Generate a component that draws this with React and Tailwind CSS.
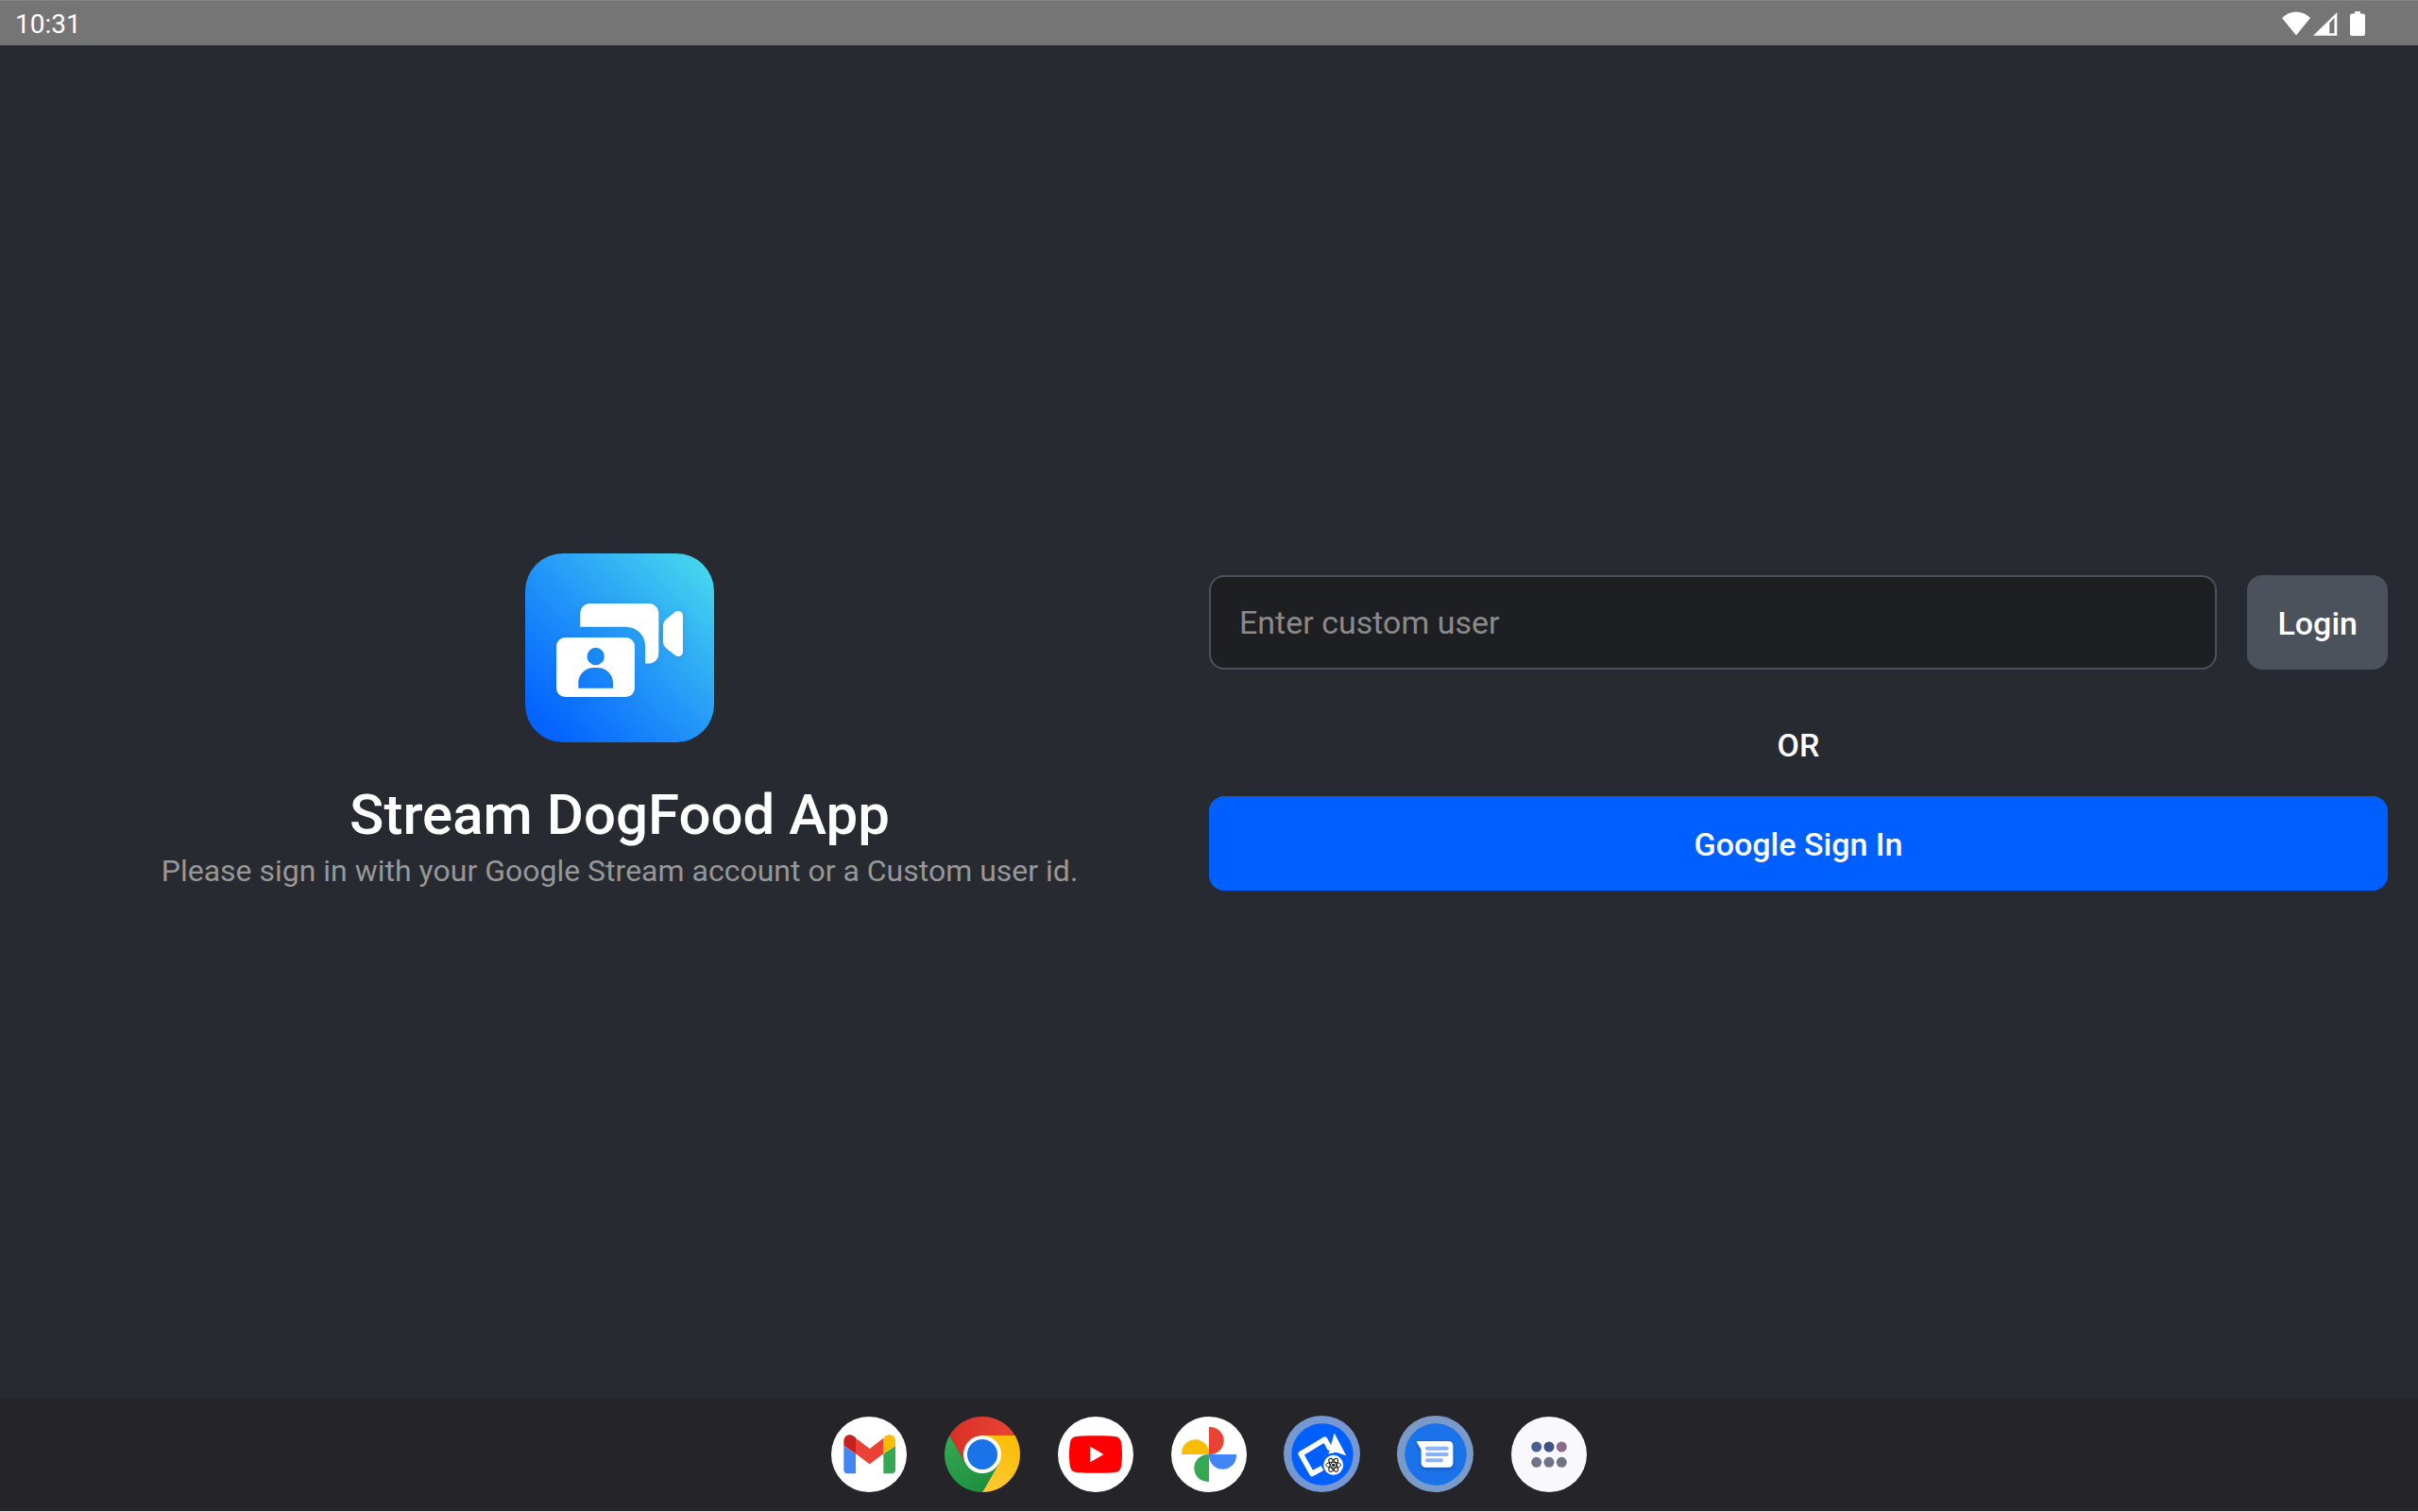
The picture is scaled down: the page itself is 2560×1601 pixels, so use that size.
import React from "react";

function WifiIcon() {
  return (
    <svg className="h-[26px] w-[30px]" viewBox="0 0 30 26" fill="#fff" aria-hidden="true">
      <path d="M15 25.500 0 7C4.300 2.800 9.500.5 15 .5S25.700 2.800 30 7Z" />
    </svg>
  );
}

function SignalIcon() {
  return (
    <svg className="h-[26px] w-[26px]" viewBox="0 0 26 26" fill="#fff" fillRule="evenodd" aria-hidden="true">
      <path d="M0 25.700 25.300 1v24.700ZM17.300 23.200h5.200V6.700l-5.200 5.500Z" />
    </svg>
  );
}

function BatteryIcon() {
  return (
    <svg className="h-[26px] w-[16px]" viewBox="0 0 16 26" fill="#fff" aria-hidden="true">
      <path d="M5 0h6v2.500h3A2 2 0 0 1 16 4.500V24a2 2 0 0 1-2 2H2a2 2 0 0 1-2-2V4.500a2 2 0 0 1 2-2h3Z" />
    </svg>
  );
}

function StatusBar() {
  return (
    <header className="flex h-12 items-center justify-between border-t border-[#858585] bg-[#757575] pr-14 pl-4">
      <time className="pt-0.5 text-[28px] leading-8 text-white">10:31</time>
      <div className="flex items-center">
        <WifiIcon />
        <span className="ml-[3px] flex">
          <SignalIcon />
        </span>
        <span className="ml-[13px] flex">
          <BatteryIcon />
        </span>
      </div>
    </header>
  );
}

function StreamLogo() {
  return (
    <svg className="size-[200px]" viewBox="0 0 200 200" role="img" aria-label="Stream Video">
      <defs>
        <linearGradient id="logo-bg" x1="22" y1="178" x2="188" y2="12" gradientUnits="userSpaceOnUse">
          <stop offset="0" stopColor="#0564ff" />
          <stop offset="0.5" stopColor="#259af8" />
          <stop offset="1" stopColor="#45d5ee" />
        </linearGradient>
        <filter id="logo-shadow" x="-20%" y="-20%" width="140%" height="140%">
          <feDropShadow dx="0" dy="1" stdDeviation="4" floodColor="#003c8c" floodOpacity="0.160" />
        </filter>
      </defs>
      <rect width="200" height="200" rx="40" fill="url(#logo-bg)" />
      <g fill="#fff" filter="url(#logo-shadow)">
        <path d="M58.300 77.700V63a10 10 0 0 1 10-10h63a10 10 0 0 1 10 10v43.500a10 10 0 0 1-10 10h-4.100V98.500a20.500 20.500 0 0 0-20.500-20.800Z" />
        <path
          fillRule="evenodd"
          d="M42.500 89h64a9.500 9.500 0 0 1 9.500 9.500v44a9.500 9.500 0 0 1-9.500 9.500h-64a9.500 9.500 0 0 1-9.500-9.500v-44a9.500 9.500 0 0 1 9.500-9.500ZM74.700 99.800a9.200 9.200 0 1 0 0 18.400a9.200 9.200 0 1 0 0-18.400ZM56.300 142.700H93V137a16 16 0 0 0-16-16h-4.700a16 16 0 0 0-16 16Z"
        />
        <path d="M146 77.500c0-3.500 1-5.800 3.500-7.900l9-7.400c3.500-2.800 8.500-1 8.500 4.300v37c0 5.300-5 7.100-8.500 4.300l-9-7.400c-2.500-2.100-3.500-4.400-3.500-7.900Z" />
      </g>
    </svg>
  );
}

function GmailIcon() {
  return (
    <svg className="size-20" viewBox="0 0 80 80" aria-hidden="true">
      <circle cx="40" cy="40" r="40" fill="#fff" />
      <path d="M13.300 31 26 39.300v21h-8.700a4 4 0 0 1-4-4Z" fill="#4285f4" />
      <path d="M68 31 55.300 39.300v21H64a4 4 0 0 0 4-4Z" fill="#34a853" />
      <path d="M26 22.700 40.700 34l14.600-11.300v16.600l-14.600 11L26 39.300Z" fill="#ea4335" />
      <path d="M26 39.300 13.300 30.700V26c0-6 6.200-8.800 11-5.100L26 22.300Z" fill="#c5221f" />
      <path d="M55.300 39.300 68 30.700V26c0-6-6.200-8.800-11-5.100l-1.700 1.400Z" fill="#fbbc04" />
    </svg>
  );
}

function ChromeIcon() {
  return (
    <svg className="size-20" viewBox="0 0 80 80" aria-hidden="true">
      <defs>
        <linearGradient id="chrome-red" x1="0" x2="1">
          <stop offset="0" stopColor="#d93025" />
          <stop offset="1" stopColor="#ea4335" />
        </linearGradient>
        <linearGradient id="chrome-yellow" x1="0.700" y1="0" x2="0.300" y2="1">
          <stop offset="0" stopColor="#fbbc04" />
          <stop offset="1" stopColor="#fcc934" />
        </linearGradient>
        <linearGradient id="chrome-green" x1="0.200" y1="0" x2="0.700" y2="1">
          <stop offset="0" stopColor="#34a853" />
          <stop offset="1" stopColor="#1e8e3e" />
        </linearGradient>
      </defs>
      <path d="M5.360 20A40 40 0 0 1 74.640 20H40L22.680 50Z" fill="url(#chrome-red)" />
      <path d="M74.640 20A40 40 0 0 1 40 80L57.320 50 40 20Z" fill="url(#chrome-yellow)" />
      <path d="M40 80A40 40 0 0 1 5.360 20L22.680 50 57.320 50Z" fill="url(#chrome-green)" />
      <circle cx="40" cy="40" r="20" fill="#fff" />
      <circle cx="40" cy="40" r="16" fill="#1a73e8" />
    </svg>
  );
}

function YouTubeIcon() {
  return (
    <svg className="size-20" viewBox="0 0 80 80" aria-hidden="true">
      <circle cx="40" cy="40" r="40" fill="#fff" />
      <path
        d="M40 20.300c9 0 17.500.2 21.900 1 2.500.6 4.300 2.300 4.900 4.900.8 4 1.200 9 1.200 13.800s-.4 9.800-1.200 13.800c-.6 2.600-2.400 4.300-4.900 4.900-4.400.8-12.900 1-21.900 1s-17.500-.2-21.900-1c-2.500-.6-4.300-2.300-4.900-4.900-.8-4-1.200-9-1.200-13.800s.4-9.800 1.200-13.800c.6-2.600 2.400-4.300 4.900-4.900 4.400-.8 12.900-1 21.900-1Z"
        fill="#f00"
      />
      <path d="M34.300 31.800 48.500 40 34.300 48.200Z" fill="#fff" />
    </svg>
  );
}

function PhotosIcon() {
  return (
    <svg className="size-20" viewBox="0 0 80 80" aria-hidden="true">
      <circle cx="40" cy="40" r="40" fill="#fff" />
      <path d="M40 11h1.200a14.500 14.500 0 0 1 0 29H40Z" fill="#ea4335" />
      <path d="M69 40v1.200a14.500 14.500 0 0 1-29 0V40Z" fill="#4285f4" />
      <path d="M40 69h-1.200a14.500 14.500 0 0 1 0-29H40Z" fill="#34a853" />
      <path d="M11 40v-1.200a14.500 14.500 0 0 1 29 0V40Z" fill="#fbbc04" />
    </svg>
  );
}

function StreamReactIcon() {
  return (
    <svg className="size-20 overflow-visible" viewBox="0 0 80 80" aria-hidden="true">
      <circle cx="39.500" cy="39.500" r="40.500" fill="#7597d2" />
      <circle cx="40" cy="40" r="32.700" fill="#0060ff" />
      <path
        d="M40 54.500 29 60.500 17.200 39.500 42.600 24.200 48.500 34.500"
        fill="none"
        stroke="#fff"
        strokeWidth="5.600"
        strokeLinejoin="round"
      />
      <path d="M52.700 17.500 65.300 41.200 54.500 37.800 46.500 39.500Z" fill="#fff" />
      <circle cx="51.700" cy="51.300" r="10.500" fill="#fff" />
      <g fill="none" stroke="#111" strokeWidth="0.900">
        <ellipse cx="51.700" cy="51.300" rx="8" ry="3" />
        <ellipse cx="51.700" cy="51.300" rx="8" ry="3" transform="rotate(60 51.700 51.300)" />
        <ellipse cx="51.700" cy="51.300" rx="8" ry="3" transform="rotate(120 51.700 51.300)" />
      </g>
      <circle cx="51.700" cy="51.300" r="1.600" fill="#111" />
    </svg>
  );
}

function MessagesIcon() {
  return (
    <svg className="size-20 overflow-visible" viewBox="0 0 80 80" aria-hidden="true">
      <defs>
        <filter id="bubble-shadow" x="-20%" y="-20%" width="140%" height="150%">
          <feDropShadow dx="0" dy="1.500" stdDeviation="1.500" floodColor="#0b2f6b" floodOpacity="0.500" />
        </filter>
      </defs>
      <circle cx="39.500" cy="39.500" r="40.500" fill="#7a9ac9" />
      <circle cx="40" cy="40" r="32.700" fill="#1a73e8" />
      <path
        d="M21 26h32.800a4.500 4.500 0 0 1 4.500 4.500v18.800a4.500 4.500 0 0 1-4.500 4.500H29.200a4.500 4.500 0 0 1-4.500-4.500V35l-4.500-7.500c-.4-.8 0-1.500.8-1.500Z"
        fill="#fff"
        filter="url(#bubble-shadow)"
      />
      <g stroke="#8ab4f8" strokeWidth="4" strokeLinecap="round">
        <path d="M31 33.800h20.700" />
        <path d="M31 40h20.700" />
        <path d="M31 46.300h15" />
      </g>
    </svg>
  );
}

function AllAppsIcon() {
  return (
    <svg className="size-20" viewBox="0 0 80 80" aria-hidden="true">
      <circle cx="40" cy="40" r="40" fill="#f9f8fd" />
      <circle cx="26.700" cy="32" r="5.500" fill="#4a5d94" />
      <circle cx="40" cy="32" r="5.500" fill="#3f5187" />
      <circle cx="53.300" cy="32" r="5.500" fill="#8b6a8b" />
      <circle cx="26.700" cy="48.300" r="5.500" fill="#6f7488" />
      <circle cx="40" cy="48.300" r="5.500" fill="#6f7488" />
      <circle cx="53.300" cy="48.300" r="5.500" fill="#6f7488" />
    </svg>
  );
}

const apps = [
  { name: "Gmail", Icon: GmailIcon },
  { name: "Chrome", Icon: ChromeIcon },
  { name: "YouTube", Icon: YouTubeIcon },
  { name: "Photos", Icon: PhotosIcon },
  { name: "Stream DogFood", Icon: StreamReactIcon },
  { name: "Messages", Icon: MessagesIcon },
  { name: "All apps", Icon: AllAppsIcon },
];

function Taskbar() {
  return (
    <nav aria-label="Taskbar" className="flex h-[120px] items-center justify-center gap-10 bg-[#252429]">
      {apps.map(({ name, Icon }) => (
        <button key={name} type="button" aria-label={name} className="size-20 rounded-full">
          <Icon />
        </button>
      ))}
    </nav>
  );
}

export default function App() {
  return (
    <div className="flex min-h-screen flex-col border-b border-[#e6e6e6] bg-[#272a30] font-['Roboto',sans-serif] text-white">
      <StatusBar />
      <main className="grid flex-1 grid-cols-2 items-center px-8">
        <section className="flex flex-col items-center text-center">
          <StreamLogo />
          <h1 className="mt-[42px] text-[60px] leading-[70px] font-medium">Stream DogFood App</h1>
          <p className="mt-1 text-[32px] leading-10 text-[#979797]">
            Please sign in with your Google Stream account or a Custom user id.
          </p>
        </section>
        <form className="flex flex-col pt-6" onSubmit={(e) => e.preventDefault()}>
          <div className="flex gap-8">
            <input
              type="text"
              aria-label="Enter custom user"
              placeholder="Enter custom user"
              className="h-[100px] min-w-0 flex-1 rounded-2xl border-2 border-[#4c525c] bg-[#1e1f22] px-[30px] text-[34px] text-white outline-none placeholder:text-[#8a8a8a]"
            />
            <button type="submit" className="h-[100px] rounded-2xl bg-[#4c525c] px-8 pt-0.5 text-[34px] font-medium">
              Login
            </button>
          </div>
          <p className="mt-[60px] mb-[34px] text-center text-[34px] leading-10 font-medium">OR</p>
          <button type="button" className="h-[100px] rounded-2xl bg-[#0060ff] pt-0.5 text-[34px] font-medium">
            Google Sign In
          </button>
        </form>
      </main>
      <Taskbar />
    </div>
  );
}
